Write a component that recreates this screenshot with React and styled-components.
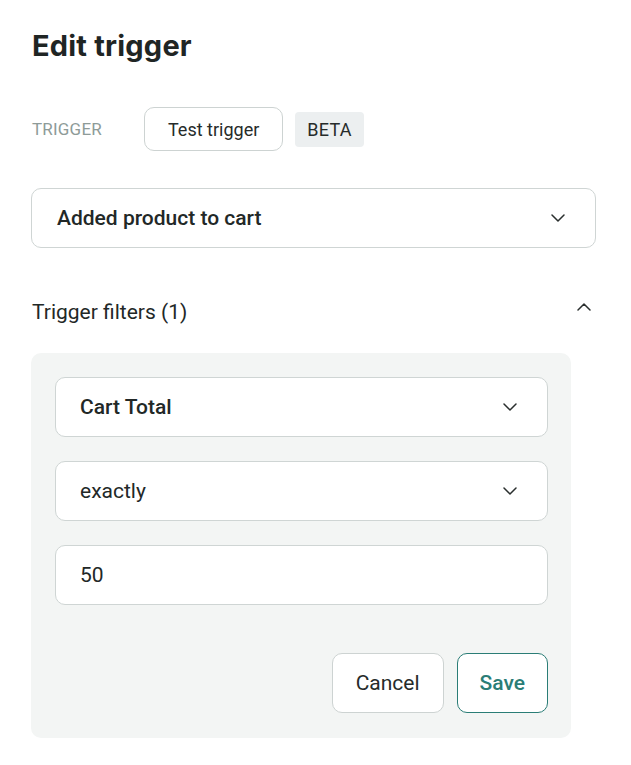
import React from "react";
import styled, { createGlobalStyle } from "styled-components";

const Global = createGlobalStyle`
  html, body { margin: 0; padding: 0; background: #fff; }
  body { font-family: Roboto, "Liberation Sans", sans-serif; color: #222827; }
  * { box-sizing: border-box; }
`;

const Page = styled.div`
  width: 631px;
  padding: 27px 35px 28px 31px;
  display: flex;
  flex-direction: column;
`;

const Title = styled.h1`
  margin: 0 0 0 1px;
  font-family: Inter, "Open Sans", sans-serif;
  font-weight: 700;
  font-size: 29px;
  line-height: 38px;
  color: #1f2524;
  letter-spacing: 0.2px;
`;

const TriggerRow = styled.div`
  display: flex;
  align-items: center;
  margin-top: 42px;
  margin-left: 1px;
`;

const Label = styled.span`
  font-size: 17px;
  color: #8e9b98;
  width: 112px;
  letter-spacing: 0.2px;
`;

const OutlineButton = styled.button`
  font-family: Roboto, "Liberation Sans", sans-serif;
  background: #fff;
  border: 1px solid ${(p) => (p.$accent ? "#2a7d76" : "#cdd3d2")};
  color: ${(p) => (p.$accent ? "#2a7d76" : "#262b2a")};
  font-size: ${(p) => p.$size || 18}px;
  font-weight: ${(p) => (p.$accent ? 500 : 400)};
  border-radius: 10px;
  height: ${(p) => p.$h || 44}px;
  padding: 0 ${(p) => p.$px || 23}px;
  cursor: pointer;
`;

const Badge = styled.span`
  margin-left: 12px;
  background: #eceff0;
  border-radius: 4px;
  padding: 0 12px;
  height: 35px;
  display: inline-flex;
  align-items: center;
  font-size: 18px;
  color: #262b2a;
  letter-spacing: 0.3px;
`;

const Select = styled.div`
  display: flex;
  align-items: center;
  justify-content: space-between;
  height: 60px;
  background: #fff;
  border: 1px solid #cfd5d4;
  border-radius: 10px;
  padding: 0 ${(p) => p.$pr || 30}px 0 24px;
  font-size: 21px;
  font-weight: ${(p) => (p.$bold ? 500 : 400)};
  color: #222827;
`;

const MainSelect = styled(Select)`
  margin-top: 37px;
  padding-left: 25px;
`;

const SectionHeader = styled.div`
  display: flex;
  align-items: center;
  justify-content: space-between;
  margin-top: 52px;
  margin-left: 1px;
  padding-right: 4px;
  font-size: 21px;
  color: #222827;
`;

const ToggleIcon = styled.span`
  display: inline-flex;
  margin-bottom: 11px;
  margin-right: 1px;
`;

const Panel = styled.div`
  margin-top: 29px;
  width: 540px;
  background: #f3f5f4;
  border-radius: 10px;
  padding: 24px 23px 25px 24px;
  display: flex;
  flex-direction: column;
  gap: 24px;
`;

const Actions = styled.div`
  display: flex;
  justify-content: flex-end;
  gap: 13px;
  margin-top: 24px;
`;

const Chevron = ({ up }) => (
  <svg width="14" height="8" viewBox="0 0 14 8" fill="none">
    <path
      d={up ? "M1 7 L7 1 L13 7" : "M1 1 L7 7 L13 1"}
      stroke="#2a2f2e"
      strokeWidth="1.5"
      strokeLinecap="round"
      strokeLinejoin="round"
    />
  </svg>
);

export default function App() {
  return (
    <>
      <Global />
      <Page>
        <Title>Edit trigger</Title>
        <TriggerRow>
          <Label>TRIGGER</Label>
          <OutlineButton>Test trigger</OutlineButton>
          <Badge>BETA</Badge>
        </TriggerRow>
        <MainSelect $bold>
          <span>Added product to cart</span>
          <Chevron />
        </MainSelect>
        <SectionHeader>
          <span>Trigger filters (1)</span>
          <ToggleIcon>
            <Chevron up />
          </ToggleIcon>
        </SectionHeader>
        <Panel>
          <Select $bold>
            <span>Cart Total</span>
            <Chevron />
          </Select>
          <Select>
            <span>exactly</span>
            <Chevron />
          </Select>
          <Select>
            <span>50</span>
          </Select>
          <Actions>
            <OutlineButton $size={21} $h={60} $px={23}>Cancel</OutlineButton>
            <OutlineButton $accent $size={21} $h={60} $px={22}>Save</OutlineButton>
          </Actions>
        </Panel>
      </Page>
    </>
  );
}
